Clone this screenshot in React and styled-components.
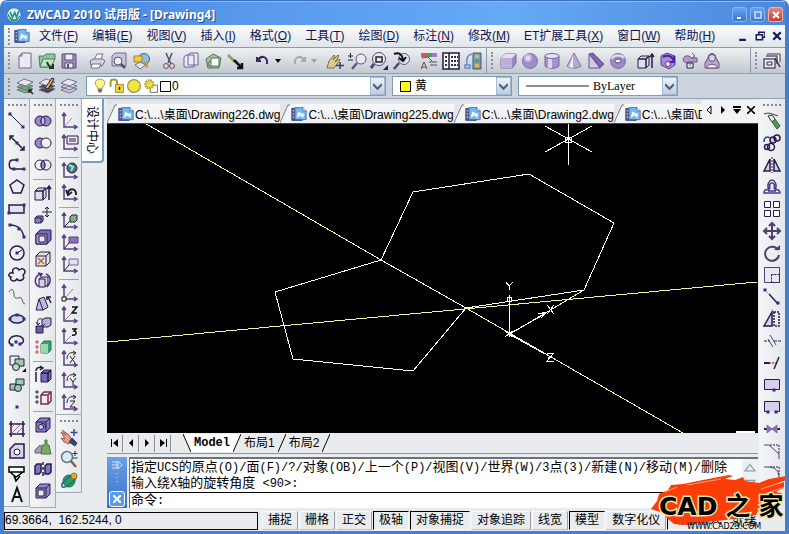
import React, { useState } from 'react';
import styled, { createGlobalStyle, css } from 'styled-components';

const GlobalStyle = createGlobalStyle`
  * {
    box-sizing: border-box;
  }
  body {
    margin: 0;
    background: #fff;
    font-family: 'Liberation Sans', 'Noto Sans CJK SC', sans-serif;
    font-size: 12px;
    color: #000;
  }
  button, input, select {
    font: inherit;
    color: inherit;
    padding: 0;
    margin: 0;
    border: 0;
    background: none;
  }
`;

// ---------- window frame ----------

const Window = styled.div`
  display: flex;
  flex-direction: column;
  height: 100vh;
  min-height: 530px;
  overflow: hidden;
  position: relative;
  border: solid #4180d0;
  border-width: 0 4px 3px;
  border-radius: 7px 7px 0 0;
  background: #e9ecee;
`;

const TitleBar = styled.header`
  display: flex;
  align-items: center;
  gap: 5px;
  flex: none;
  height: 25px;
  margin: 0 -4px;
  padding: 3px 6px 0;
  border-top: 1px solid #3a70bd;
  background: linear-gradient(to right, #4181dc, #5a9bee 35%, #65a9f6 65%, #4a87da);
  box-shadow: inset 0 1px 0 #8bbdf5;
`;

const Title = styled.h1`
  flex: 1;
  margin: 0;
  font-family: 'Noto Sans', 'Noto Sans CJK SC', sans-serif;
  font-size: 12px;
  font-weight: bold;
  line-height: 20px;
  color: #fff;
  text-shadow: 1px 1px 0 #1f4a8c;
`;

const WindowButtons = styled.div`
  display: flex;
  gap: 3px;
`;

const WindowButton = styled.button`
  display: flex;
  align-items: center;
  justify-content: center;
  width: 15px;
  height: 15px;
  border: 1px solid ${(props) => (props.$close ? '#f0b0a4' : '#86b4f2')};
  border-radius: 3px;
  background: ${(props) =>
    props.$close
      ? 'linear-gradient(#e08a7c, #c8382c)'
      : 'linear-gradient(#6ba3ee, #3a74d0)'};
`;

const MenuBar = styled.nav`
  display: flex;
  align-items: center;
  flex: none;
  height: 23px;
  background: linear-gradient(#fafbfc, #e0e5ea);
  border-bottom: 1px solid #8b99a8;
`;

const Menus = styled.div`
  display: flex;
  flex: 1;
`;

const MenuItem = styled.button`
  padding: 0 7px;
  line-height: 20px;
  white-space: nowrap;
  color: #0a1450;
`;

const MdiButton = styled.button`
  display: flex;
  align-items: center;
  justify-content: center;
  width: 17px;
  height: 18px;
`;

// ---------- toolbars ----------

const Toolbar = styled.div`
  display: flex;
  flex: none;
  height: ${(props) => (props.$flat ? '25px' : '26px')};
  background: ${(props) =>
    props.$flat ? '#cbd3dc' : 'linear-gradient(#eef0f2, #c2c9d1)'};
  border-bottom: 1px solid #93a1b0;
`;

const ToolSection = styled.div`
  display: flex;
  align-items: center;
  gap: 6px;
  flex: ${(props) => (props.$grow ? 1 : 'none')};
  padding-right: 2px;
  border-right: ${(props) => (props.$last ? 'none' : '1px solid #8d99a6')};
`;

const ToolGroup = styled.div`
  display: flex;
  align-items: center;
`;

const Grip = styled.span`
  flex: none;
  ${(props) =>
    props.$wide
      ? css`
          width: 18px;
          margin: 5px 0 4px;
          border-top: 2px dotted #7d8894;
        `
      : css`
          height: 17px;
          margin: 0 -2px 0 4px;
          border-left: 2px dotted #8893a0;
        `}
`;

const ToolButton = styled.button`
  display: flex;
  align-items: center;
  justify-content: center;
  flex: none;
  width: ${(props) => (props.$narrow ? '8px' : '22px')};
  height: 22px;
`;

const Combo = styled.div`
  display: flex;
  align-items: center;
  gap: ${(props) => props.$gap || 2}px;
  width: ${(props) => props.$width}px;
  height: 20px;
  padding-left: ${(props) => props.$indent}px;
  border: 1px solid #7f9db9;
  background: #fff;
  font-family: ${(props) => (props.$serif ? "'Liberation Serif', serif" : 'inherit')};
`;

const ComboSelect = styled.select`
  flex: 1;
  min-width: 0;
  height: 18px;
  appearance: none;
  outline: none;
`;

const ComboArrow = styled.span`
  display: flex;
  align-items: center;
  justify-content: center;
  width: 15px;
  height: 18px;
  border: 1px solid #a5b9d0;
  background: linear-gradient(#edf2f8, #c0cede);
`;

// ---------- body ----------

const Body = styled.div`
  display: flex;
  flex: 1;
  min-height: 0;
`;

const ColumnStack = styled.div`
  display: flex;
  flex-direction: column;
  flex: none;
`;

const ToolColumn = styled.div`
  display: flex;
  flex-direction: column;
  align-items: center;
  flex: none;
  align-self: flex-start;
  width: 26px;
  max-height: 100%;
  overflow: hidden;
  padding-bottom: ${(props) => props.$bottom || 0}px;
  border: solid #a0acb8;
  border-width: ${(props) => (props.$bare ? '0' : '0 1px 1px 0')};
  background: linear-gradient(to right, #f4f5f6, #e4e8eb);
`;

const Divider = styled.span`
  flex: none;
  width: 20px;
  height: 1px;
  margin: 3px 0 2px;
  background: #9aa5b0;
`;

const SideTab = styled.button`
  flex: none;
  align-self: flex-start;
  width: 22px;
  height: 64px;
  border: 1px solid #7d9cc0;
  border-width: 0 2px 2px 0;
  border-radius: 0 0 4px 0;
  background: #fff;
  writing-mode: vertical-rl;
  text-orientation: sideways;
  line-height: 20px;
`;

const Main = styled.main`
  display: flex;
  flex-direction: column;
  flex: 1;
  min-width: 0;
  padding: 0 1px 0 3px;
`;

const DocumentTabs = styled.div`
  display: flex;
  flex: none;
  height: 25px;
  padding-top: 5px;
  background: linear-gradient(#dde1e5, #f3f4f5);
  border-bottom: 1px solid #444;
`;

const TabStrip = styled.div`
  display: flex;
  flex: 1;
  min-width: 0;
  overflow: hidden;
`;

const DocumentTab = styled.button`
  display: flex;
  align-items: center;
  flex: none;
  gap: 1px;
  height: 19px;
  white-space: nowrap;
  background: linear-gradient(#f7f8f9, #eceef0);
`;

const TabControls = styled.div`
  display: flex;
  flex: none;
  margin-top: -4px;
  background: #f1f3f4;
`;

const TabControl = styled.button`
  display: flex;
  align-items: center;
  justify-content: center;
  width: 14px;
  height: 20px;
`;

const Canvas = styled.div`
  flex: 1;
  min-height: 0;
  overflow: hidden;
  background: #000;
`;

const LayoutBar = styled.div`
  display: flex;
  align-items: center;
  flex: none;
  height: 21px;
  margin-bottom: 3px;
  border-bottom: 1px solid #8b9298;
`;

const LayoutNav = styled.button`
  display: flex;
  align-items: center;
  justify-content: center;
  width: 16px;
  height: 17px;
  border-right: 1px solid #8b9298;
`;

const LayoutTabs = styled.div`
  display: flex;
  padding-left: 12px;
`;

const LayoutTab = styled.button`
  height: 18px;
  padding: 0 3px;
  line-height: 18px;
  background: ${(props) => (props.$active ? '#fff' : 'none')};
  font-family: ${(props) =>
    props.$active ? "'Liberation Mono', monospace" : 'inherit'};
  font-weight: ${(props) => (props.$active ? 'bold' : 'normal')};
`;

// ---------- command line ----------

const CommandPanel = styled.section`
  display: flex;
  flex: none;
  height: 51px;
`;

const CommandHandle = styled.div`
  display: flex;
  flex-direction: column;
  align-items: center;
  justify-content: space-between;
  width: 20px;
  margin-right: 2px;
  padding: 3px 0 1px;
  background: linear-gradient(#6aa0e6, #3b72c4);
`;

const CommandClose = styled.button`
  display: flex;
  align-items: center;
  justify-content: center;
  width: 16px;
  height: 16px;
  border: 1px solid #fff;
  border-radius: 3px;
  background: #5d9be6;
`;

const CommandBody = styled.div`
  display: flex;
  flex-direction: column;
  flex: 1;
  min-width: 0;
  border: solid #6c7378;
  border-width: 2px 0 0 1px;
  background: #fff;
  font-family: 'Liberation Mono', 'Noto Sans CJK SC', monospace;
`;

const CommandLog = styled.div`
  display: flex;
  height: 34px;
  border-bottom: 1px solid #000;
`;

const LogText = styled.div`
  flex: 1;
  min-width: 0;
  overflow: hidden;
  padding: 1px 1px 0;
  line-height: 16px;
  white-space: nowrap;
`;

const LogLine = styled.p`
  margin: 0;
  height: 16px;
`;

const Han = styled.span`
  font-size: 13px;
`;

const ScrollBar = styled.div`
  display: flex;
  flex-direction: column;
  justify-content: space-between;
  width: 16px;
  background: #eef1f3;
`;

const ScrollButton = styled.button`
  display: flex;
  align-items: center;
  justify-content: center;
  height: 16px;
`;

const CommandEntry = styled.label`
  display: flex;
  align-items: center;
  gap: 4px;
  flex: 1;
  padding: 0 1px;
  line-height: 14px;
`;

const CommandInput = styled.input`
  flex: 1;
  min-width: 0;
  height: 14px;
  outline: none;
`;

// ---------- status bar ----------

const StatusBar = styled.footer`
  display: flex;
  align-items: center;
  gap: 1px;
  flex: none;
  height: 23px;
  padding-top: 2px;
  white-space: nowrap;
`;

const Coordinates = styled.output`
  width: 254px;
  height: 18px;
  margin-right: 3px;
  border: 1px solid #000;
  line-height: 15px;
  white-space: pre;
`;

const StatusButton = styled.button`
  height: 19px;
  padding: 0 5px;
  line-height: 17px;
  border: 1px solid;
  border-color: ${(props) =>
    props.$pressed ? '#000 #f6f7f8 #f6f7f8 #000' : '#f8f9fa #9aa1a8 #b8bec4 #f8f9fa'};
`;

const StatusText = styled.span`
  margin-left: 4px;
`;

// ---------- logo over the corner ----------

const Badge = styled.div`
  position: absolute;
  right: -4px;
  bottom: -3px;
  width: 140px;
  height: 60px;
`;

const BadgeBrush = styled.svg`
  position: absolute;
  inset: 0;
`;

const BadgeName = styled.div`
  position: absolute;
  left: 10px;
  top: 18px;
  display: flex;
  align-items: center;
  gap: 8px;
  font-family: 'DejaVu Sans', 'Noto Sans CJK SC', sans-serif;
  font-size: 25px;
  font-weight: bold;
  line-height: 30px;
  color: #000;
  -webkit-text-stroke: 3px #f4e3a4;
  paint-order: stroke fill;
`;

const BadgeUrl = styled.div`
  position: absolute;
  left: 38px;
  top: 48px;
  font-family: 'DejaVu Sans', sans-serif;
  font-size: 8px;
  line-height: 10px;
  color: #000;
`;

// ---------- icons ----------

const ink = '#2a1a48';
const violet = '#8470b4';
const pale = '#d8d0ea';

const ucsAxes = (
  <path d="M5 2v14h13M3 5l2-3 2 3M15 14l3 2-3 2" stroke="#5a4080" strokeWidth="1.5" />
);

const cube = (fill) => (
  <>
    <path d="M3 7l4-4h10v10l-4 4H3z" fill={fill} />
    <path d="M3 7h10v10M13 7l4-4" />
  </>
);

const stack = (color) => (
  <>
    <path d="M2 14l7-4 9 3-7 4zM2 11l7-4 9 3-7 4z" fill={color} stroke="#77728a" />
    <path d="M2 7l7-4 9 3-7 4z" fill="#e8e4f2" stroke="#77728a" />
  </>
);

const dots = (...points) =>
  points.map(([x, y]) => (
    <rect key={`${x}-${y}`} x={x - 1.5} y={y - 1.5} width="3" height="3" fill="#3b2a78" stroke="none" />
  ));

const ICONS = {
  app: (
    <>
      <circle cx="10" cy="10" r="9" fill="#d6f0ee" stroke="#2a6a8c" />
      <path d="M3 9c3 9 11 9 14 2-2 9-13 9-14-2z" fill="#1e8a72" stroke="#1e8a72" />
      <path d="M5 6l3 7 3-6 2 6 3-8" stroke="#258a8c" strokeWidth="2" />
    </>
  ),
  dwg: (
    <>
      <path d="M1 3h13v15H1z" fill="#56578c" stroke="#333a70" />
      <path d="M5 2h10l4 4v11H5z" fill="#78b8ee" stroke="#3f6aa8" />
      <path d="M15 2v4h4" fill="#fff" stroke="#3f6aa8" />
      <path d="M7 15l2-8 4 2 4 1-2 5-3-3z" fill="#e6f5ff" stroke="none" />
      <path d="M2 6h2M2 10h2M2 14h2" stroke="#fff" />
    </>
  ),
  new: <path d="M4 5l3-3h9v15H4zM4 5h3V2" fill="#eee8f5" stroke="#71668c" />,
  open: (
    <>
      <path d="M2 5h5l2-2h9v4l-4 9H3z" fill="#8fc79c" stroke="#4c7a5c" />
      <path d="M6 8h12l-4 8H3z" fill="#c4e3ca" stroke="#4c7a5c" />
      <path d="M10 11c1 4 3 5 6 6M16 13v4h-4" stroke="#1d3a20" strokeWidth="2" />
    </>
  ),
  save: (
    <>
      <path d="M3 3h14v14H3z" fill="#9c8cb8" stroke="#5c4f80" />
      <path d="M6 3h8v6H6zM6 12h8v5H6z" fill="#efeaf6" stroke="#5c4f80" />
      <path d="M8 13h2v4H8z" fill="#5c4f80" stroke="none" />
    </>
  ),
  print: (
    <>
      <path d="M7 9l3-6h6l-3 7z" fill="#fff" stroke="#74698c" />
      <path d="M3 10l3-2h10l2 2-3 5H4z" fill="#d7cfe4" stroke="#74698c" />
      <path d="M5 13h9l-2 4H4z" fill="#fff" stroke="#74698c" />
    </>
  ),
  preview: (
    <>
      <path d="M3 5l3-3h11v13H3z" fill="#cfc5e2" stroke="#74698c" />
      <circle cx="9" cy="10" r="4" fill="#eef1fa" stroke="#55506c" />
      <path d="M12 13l4 4" stroke="#55506c" strokeWidth="2.5" />
    </>
  ),
  publish: (
    <>
      <circle cx="13" cy="8" r="5.5" fill="#8cc0e0" stroke="#40608c" />
      <path d="M3 5h8v6H3z" fill="#f3cc36" stroke="#a8801e" />
      <path d="M4 14l5-3 6 3-6 4z" fill="#e8e2f2" stroke="#74698c" />
      <path d="M13 11c3 1 4 4 2 6" stroke="#d09a20" strokeWidth="2" />
    </>
  ),
  cut: (
    <>
      <path d="M7 2l5 11M13 2L9 12" stroke="#55496c" strokeWidth="1.5" />
      <circle cx="7" cy="15" r="2.5" stroke="#7c4a6c" />
      <circle cx="13" cy="15" r="2.5" stroke="#7c4a6c" />
    </>
  ),
  copy: (
    <path d="M3 6l2-2h8v12H3zM7 4l2-2h8v12H7z" fill="#eee9f6" stroke="#6c60a0" />
  ),
  paste: (
    <>
      <path d="M3 8l7-5 8 4-2 10H5z" fill="#a6c6a6" stroke="#55705c" />
      <path d="M8 7h8v8H8z" fill="#fff" stroke="#55705c" />
      <path d="M7 10c-3 2-2 5 1 6" stroke="#3c6344" />
    </>
  ),
  match: (
    <>
      <path d="M3 4l7 7" stroke="#86a05a" strokeWidth="2.5" />
      <path d="M9 9l7 7M17 12v5h-5" stroke="#111" strokeWidth="2.5" />
    </>
  ),
  undo: <path d="M5 9c3-5 10-4 9 4M4 6v4h4" stroke="#36265c" strokeWidth="2" />,
  redo: <path d="M15 9c-3-5-10-4-9 4M16 6v4h-4" stroke="#a3abb2" strokeWidth="2" />,
  pan: (
    <>
      <path d="M2 17l2-7 5-6 1 1-2 4 5-5 1 1-4 6 4-3 1 1-6 8z" fill="#dccb8e" stroke="#7c6c44" />
      <path d="M15 11v7M11 14.500h8" stroke="#3c3c60" strokeWidth="1.5" />
    </>
  ),
  zoom: (
    <>
      <circle cx="14" cy="8" r="5" fill="#e8e8f6" stroke="#605880" />
      <path d="M10 12l-5 6" stroke="#605880" strokeWidth="2.5" />
      <path d="M1 5h5M3.500 2v5M1 9h5" stroke="#222" />
    </>
  ),
  zoomWindow: (
    <>
      <circle cx="10" cy="8" r="6.500" fill="#ebe8f6" stroke="#504870" />
      <path d="M7 6h6v5H7z" stroke="#222" strokeWidth="1.5" />
      <path d="M5 13l-3 4" stroke="#504870" strokeWidth="3" />
      <path d="M14 19h5v-5z" fill="#16206c" stroke="none" />
    </>
  ),
  zoomPrev: (
    <>
      <circle cx="13" cy="8" r="5.500" fill="#e6e4f4" stroke="#605880" />
      <path d="M8 12l-5 6" stroke="#504870" strokeWidth="2.5" />
      <path d="M3 3c5-2 8 0 9 6M15 6l-3 4-4-3" stroke="#111" strokeWidth="2" />
    </>
  ),
  props: (
    <>
      <path d="M2 2h6v4H2z" fill="#d25a5a" stroke="none" />
      <path d="M8 2h5v4H8z" fill="#49a050" stroke="none" />
      <path d="M13 2h5v4h-5z" fill="#9c7ad0" stroke="none" />
      <path d="M3 7l6-1 5 5M2 18l3-7 3 7M3 16h4" stroke="#6a4a4a" />
      <path d="M10 11h8M11 14h7" stroke="#8c98a8" strokeWidth="2" />
    </>
  ),
  calc: (
    <>
      <path d="M2 2h16v16H2zM8 2v16" fill="#f8f8fa" stroke="#1e1e3c" strokeWidth="1.5" />
      <path d="M10 6h7M10 10h7M10 14h7M4 6h2M4 10h2M4 14h2" stroke="#333" strokeWidth="2" strokeDasharray="2 1" />
    </>
  ),
  palette: (
    <>
      <path d="M10 2h8v16h-8z" fill="#7a9cc0" stroke="#44587c" />
      <path d="M12 4h4v3h-4zM12 13h4v3h-4z" fill="#e5b93a" stroke="none" />
      <path d="M12 9h4v2h-4z" fill="#49a050" stroke="none" />
      <path d="M9 3C4 4 3 8 4 14M2 14h5v3H2z" stroke="#668cc0" strokeWidth="1.5" />
    </>
  ),
  box: (
    <>
      <path d="M3 7l4-4h11v9l-4 5H3z" fill="#9a88be" stroke="#76669c" />
      <path d="M3 7l4-4h11l-4 4z" fill="#e6e0f2" stroke="none" />
      <path d="M3 7h11v10H3z" fill="#bdb0d8" stroke="none" />
    </>
  ),
  sphere: (
    <>
      <circle cx="10" cy="10" r="7.5" fill="#a08cc8" stroke="#8470b0" />
      <circle cx="8" cy="7" r="4" fill="#c6b8e2" stroke="none" />
      <circle cx="8" cy="7" r="2" fill="#e8e2f4" stroke="none" />
    </>
  ),
  cylinder: (
    <>
      <path d="M3 5v10c3 3 11 3 14 0V5z" fill="#a594ca" stroke="#76669c" />
      <path d="M6 7v10h4V7z" fill="#dcd4ec" stroke="none" />
      <ellipse cx="10" cy="5" rx="7" ry="2.5" fill="#e6e0f2" stroke="#76669c" />
    </>
  ),
  cone: (
    <>
      <path d="M10 2l7 13c-3 3-11 3-14 0z" fill="#b5a8d2" stroke="#8878a8" />
      <path d="M9 4v13l-4-1z" fill="#efeaf6" stroke="none" />
    </>
  ),
  wedge: (
    <>
      <path d="M3 3l4-1 11 11-4 4z" fill="#8068ac" stroke="#64508c" />
      <path d="M3 3l11 14H3z" fill="#d5cbe8" stroke="#64508c" />
    </>
  ),
  torus: (
    <>
      <circle cx="10" cy="10" r="7.5" fill="#9c8ac4" stroke="#8470b0" />
      <path d="M4 8c1-4 9-5 12-1" stroke="#e8e2f4" strokeWidth="2" />
      <ellipse cx="10" cy="10" rx="3" ry="2" fill="#f3f3f8" stroke="#5c4a88" />
    </>
  ),
  extrude: (
    <>
      <path d="M2 8l3-3h8v9l-3 3H2z" fill="#dedaf0" />
      <path d="M2 8h8v9M10 8l3-3M16 17V3M14 6l2-3 2 3" strokeWidth="1.5" />
    </>
  ),
  revolve3d: (
    <>
      <path d="M3 5l6-3 8 3v9l-6 4-8-4z" fill="#a58ad4" stroke="#5c4090" />
      <path d="M5 6c6-3 10 0 11 5M16 5v6h-5" stroke="#4a24a8" strokeWidth="2" />
      <path d="M7 12l4-2 2 4-4 2z" fill="#efeaf8" stroke="#5c4090" />
    </>
  ),
  sweep: (
    <>
      <path d="M3 9c0-4 6-6 8-2h6v4H9c-2 0-4 2-6-2z" fill="#ad9ccc" stroke="#62507f" />
      <path d="M7 12h6v5H7z" fill="#efeaf6" />
      <path d="M10 12v3M12 2l3 3-3 2" stroke="#62507f" />
    </>
  ),
  loft: (
    <>
      <path d="M3 17V12l3-5c0-6 8-6 8 0l3 5v5z" fill="#b6a8d0" stroke="#62507f" />
      <circle cx="10" cy="7" r="3.500" fill="#d9d1e8" stroke="#62507f" />
      <path d="M5 17c0-5 10-5 10 0z" fill="#efeaf6" stroke="#62507f" />
    </>
  ),
  redline: (
    <>
      <path d="M5 3h13v8" fill="#fff" stroke="#333" />
      <path d="M2 8h11v9H2zM4 5h11v8" fill="#efeaf6" stroke="#62507f" strokeWidth="1.5" />
      <path d="M5 11h5v3H5z" stroke="#333" />
      <path d="M13 7l5 9" stroke="#333" strokeWidth="1.500" />
    </>
  ),
  layerPrev: (
    <>
      {stack('#6cb07a')}
      <path d="M14 14l4 4M14 17v-3h3" stroke="#222" strokeWidth="1.5" />
    </>
  ),
  layerEdit: (
    <>
      {stack('#3c3c48')}
      <path d="M8 12l7-10 2 1-6 10z" fill="#e6b04a" stroke="#222" />
    </>
  ),
  layers: stack('#d0cae2'),
  bulb: (
    <>
      <path d="M7 13c0-3-3-3-3-7 0-6 12-6 12 0 0 4-3 4-3 7z" fill="#fdf68c" stroke="#8c8450" />
      <path d="M7 15h6M8 17h4" stroke="#666" strokeWidth="2" />
    </>
  ),
  lock: (
    <>
      <path d="M2 11V5c0-4 8-4 8 0v5" stroke="#a8982a" strokeWidth="2.5" />
      <path d="M8 8h10v10H8z" fill="#ecd93a" stroke="#8c7c20" />
      <path d="M13 11v4" stroke="#333" strokeWidth="2" />
    </>
  ),
  sun: <circle cx="10" cy="10" r="8" fill="#f2e63c" stroke="#8c9850" strokeWidth="1.5" />,
  sunViewport: (
    <>
      <path d="M9 9h9v9H9z" fill="#fff" stroke="#555" />
      <circle cx="8" cy="8" r="5" fill="#f0e040" stroke="#b0a43c" strokeWidth="3" strokeDasharray="2 1" />
    </>
  ),
  line: <><path d="M3 3l13 13" />{dots([3, 3], [16, 16])}</>,
  xline: <><path d="M3 3l14 14M3 7V3h4M17 13v4h-4" strokeWidth="1.5" />{dots([10, 10])}</>,
  pline: <><path d="M9 5H6c-5 0-5 9 0 9h11" strokeWidth="1.5" />{dots([10, 5], [7, 14], [17, 14])}</>,
  polygon: <path d="M10 3l7 5-3 8H6L3 8z" fill="#efecf4" strokeWidth="1.5" />,
  rectangle: <><path d="M2 6h15v8H2z" fill="#e6e0f0" strokeWidth="1.5" />{dots([2, 14], [17, 6])}</>,
  arc: <><path d="M3 4c8 0 13 5 14 13" strokeWidth="1.5" />{dots([3, 4], [12, 8], [17, 16])}</>,
  circle: <><circle cx="10" cy="10" r="7" fill="#efecf4" strokeWidth="1.5" /><path d="M10 10l5-3" />{dots([10, 10])}</>,
  cloud: <path d="M6 8c-2-6 5-6 6-3 5-4 8 2 4 5 3 5-4 7-6 4-3 4-8 1-6-2-4-1-2-5 2-4z" fill="#efecf4" strokeWidth="1.500" />,
  spline: <path d="M2 5c3-5 5-2 5 3s5 2 7 3 1 6 4 6" stroke="#555064" />,
  ellipse: <><ellipse cx="10" cy="10" rx="7" ry="4" fill="#d6d4f0" strokeWidth="1.5" />{dots([10, 6], [3, 10], [17, 10])}</>,
  ellipseArc: <><path d="M14 13c6-4 0-9-6-8S0 12 5 14" strokeWidth="1.5" />{dots([9, 11], [13, 13], [5, 14])}</>,
  block: (
    <>
      <path d="M3 3h9v9H3z" fill="#efecf4" />
      <path d="M8 6h9v7H8z" fill="#9ccca6" />
      <circle cx="9" cy="14" r="3.5" fill="#b8dcbc" />
      <path d="M15 19h4v-4z" fill="#111" stroke="none" />
    </>
  ),
  makeBlock: <><path d="M9 4h8v6H9zM3 9h6v6H3z" fill="#9ccca6" /><circle cx="11" cy="13" r="3.500" fill="#9ccca6" /></>,
  point: dots([10, 10]),
  hatch: <><path d="M4 2v16M2 5h16M16 2v16M2 15h16" strokeWidth="1.5" /><path d="M4 9l4-4M4 15L14 5M9 15l7-7" stroke="#a26a8c" /></>,
  region: <><path d="M3 17V8l5-5h9v14z" fill="#d8d4f0" strokeWidth="1.500" /><circle cx="10" cy="11" r="3" fill="#fff" /></>,
  wipeout: <path d="M2 4h15v5H2zM3 9l6 5 7-5M7 13l2 5 4-5" fill="#fff" stroke="#000" strokeWidth="1.5" />,
  text: <path d="M5 17l5-14 5 14M6 12h8" stroke="#111" strokeWidth="2" />,
  union: <><circle cx="7" cy="10" r="5" fill="#9a86d0" /><circle cx="13" cy="10" r="5" fill="#9a86d0" /><ellipse cx="10" cy="10" rx="2" ry="4" fill="#c8bcec" /></>,
  subtract: <><circle cx="7" cy="10" r="5" fill="#9a86d0" /><circle cx="13" cy="10" r="5" fill="#f2f0f8" /></>,
  intersect: <><circle cx="7" cy="10" r="5" fill="#f2f0f8" /><circle cx="13" cy="10" r="5" /><ellipse cx="10" cy="10" rx="2" ry="4" fill="#9a86d0" /></>,
  moveFace: <><path d="M2 13l2-2h6v5l-2 2H2zM2 13h6v5" fill="#8c7cc4" /><path d="M14 2v10M9 7h10M12 4l2-2 2 2M12 10l2 2 2-2" /></>,
  offsetFace: <><path d="M3 7l4-4h11v10l-4 4H3z" fill="#7a68b8" /><path d="M3 7h11v10H3z" fill="#a898d4" /><path d="M6 9h6v6H6z" fill="#eee9f8" /></>,
  deleteFace: <>{cube('#e6e0e6')}<path d="M5 9l6 6M11 9l-6 6" stroke="#c06a3c" strokeWidth="1.5" /></>,
  rotateFace: <><path d="M6 8l3-2h6v7l-3 3H6zM6 8h6v8" fill={pale} /><path d="M6 16c-6-4-4-12 2-13M13 3c6 3 5 9 1 13M5 2l4 1-2 3" stroke="#4b308c" strokeWidth="1.500" /></>,
  taperFace: <><path d="M3 17L6 6l5-2 4 10-5 3zM6 6l4 11" fill="#c4b8e4" /><path d="M15 4l3 6M14 7V4h4" strokeWidth="1.500" /></>,
  copyFace: <><path d="M9 5l3-2h6v7l-3 2H9z" fill="#b8acd8" /><path d="M3 11h7v7H3zM10 11l2-2" fill="#6d58b4" /><path d="M9 4C5 3 4 5 5 9M3 7l2 3 2-2" /></>,
  colorFace: <><path d="M8 7l3-3h7v9l-3 3H8z" fill="#3d9c70" stroke="#2a7050" /><path d="M8 7h7v9H8z" fill="#96d8b0" stroke="none" /><path d="M3 4h2v2H3zM3 9h2v2H3zM3 14h2v2H3z" stroke="#c0504a" /></>,
  copyEdge: <><path d="M8 8l3-3h7v9l-3 3H8z" fill="#7a66c0" /><path d="M8 8h7v9M15 8l3-3M3 17V7M3 6c0-4 4-4 6-3M7 1l3 2-3 2" strokeWidth="1.5" /></>,
  colorEdge: <><path d="M8 8l3-3h7v9l-3 3H8zM8 8h7v9M15 8l3-3" fill="#f4eef2" stroke="#7c2c50" strokeWidth="1.500" /><path d="M3 4h2v2H3zM3 9h2v2H3zM3 14h2v2H3z" stroke="#333" /></>,
  imprint: <>{cube('#8878c8')}<circle cx="8" cy="12" r="2.500" fill={pale} /><path d="M8 9c4-2 5 2 4 4" /></>,
  clean: <><path d="M2 13l5-5 5 8H2z" fill="#a898c4" stroke="#666" /><path d="M9 8h3V3h2v5h2l2 9H8z" fill="#7aac60" stroke="#4c7040" /></>,
  separate: <path d="M2 7l2-2h4v8l-2 2H2zM12 7l2-2h4v8l-2 2h-4zM10 3v3M10 8v3M10 13v4" fill="#8474c4" strokeWidth="1.5" />,
  shell: <>{cube('#9486cc')}<path d="M5 9h6v6H5z" fill="#eee" /></>,
  ucs: <>{ucsAxes}<path d="M6 15l7-8" stroke="#999" /></>,
  ucsNamed: <>{ucsAxes}<path d="M8 3h11v8H8z" fill="#f0ecf6" /><path d="M10 6h7M10 8h7" /></>,
  ucsWorld: <>{ucsAxes}<circle cx="13" cy="7" r="5" fill="#3c7c80" /><path d="M10 4l4 2-2 4" stroke="#a8dcc8" strokeWidth="2" /></>,
  ucsPrev: <>{ucsAxes}<path d="M9 11c-1-6 9-7 8 1M7 7l2 5 4-3" stroke="#222" strokeWidth="2" /></>,
  ucsFace: <>{ucsAxes}<path d="M11 6l2-2h5v5l-2 2h-5z" fill="#7cb87c" /><path d="M5 16l6-6" /></>,
  ucsObject: <>{ucsAxes}<path d="M10 4h9v6h-9z" fill="#8470bc" stroke="#5a4080" /><path d="M5 16l5-6" /></>,
  ucsView: <>{ucsAxes}<path d="M10 4h9v6h-9z" fill="#e4dff0" stroke="#75669c" /><path d="M5 16l5-6" /></>,
  ucsOrigin: <>{ucsAxes}<path d="M6 15l8-9" stroke="#888" /><path d="M3 14h4v4H3z" fill="#fff" stroke="#111" /></>,
  ucsZAxis: <>{ucsAxes}<path d="M6 15l6-6" stroke="#888" /><path d="M13 2h5l-5 6h5" stroke="#111" strokeWidth="1.5" /></>,
  ucs3Point: <>{ucsAxes}<path d="M6 15l6-6" stroke="#888" /><path d="M13 2h4l-2 2c4 1 2 5-2 4" stroke="#111" strokeWidth="1.5" /></>,
  ucsX: <>{ucsAxes}<path d="M8 10c0-6 4-7 8-6M14 2l3 2-3 2M11 7l5 7M16 7l-5 7" stroke="#222" /></>,
  ucsY: <>{ucsAxes}<path d="M8 10c0-6 4-7 8-6M14 2l3 2-3 2M11 7l3 4 3-4M14 11v4" stroke="#222" /></>,
  ucsZ: <>{ucsAxes}<path d="M8 10c0-6 4-7 8-6M14 2l3 2-3 2M11 8h5l-5 6h5" stroke="#222" /></>,
  hand: (
    <>
      <path d="M2 5l5 3-4-5 7 5 3 5-3 4-5-2-3-4 4 1z" fill="#e0a088" stroke="#9c5c50" />
      <path d="M10 15l3-4 5 5-2 3z" fill="#34466c" stroke="#34466c" />
      <path d="M15 2v7M11.500 5.500h7" stroke="#3c4c90" strokeWidth="1.500" />
    </>
  ),
  zoomTime: (
    <>
      <circle cx="8" cy="8" r="5.5" fill="#d4eef6" stroke="#6c7480" strokeWidth="1.500" />
      <path d="M12 12l5 6" stroke="#8c5a3c" strokeWidth="2.5" />
      <path d="M16 2v5M13.500 4.500h5M13.500 9h5" stroke="#26365c" />
    </>
  ),
  orbit: (
    <>
      <circle cx="10" cy="10" r="6" fill="#28a058" stroke="#1c7040" />
      <ellipse cx="10" cy="10" rx="9" ry="3" transform="rotate(-38 10 10)" fill="none" stroke="#2c6c90" strokeWidth="1.5" />
      <circle cx="15" cy="5" r="3" fill="#d8ac38" stroke="#98741c" />
    </>
  ),
  erase: (
    <>
      <path d="M2 3c5-2 8 0 14 2" stroke="#333" />
      <path d="M6 5l4-1 8 11-3 3z" fill="#4f9c54" stroke="#3c5040" />
      <path d="M6 5l4-1 3 4-3 3z" fill="#f0ece0" stroke="#3c5040" />
    </>
  ),
  copyObj: <g strokeWidth="1.500"><circle cx="11" cy="7" r="3" fill={pale} /><circle cx="15" cy="5" r="3" /><circle cx="9" cy="14" r="3.500" /><circle cx="5" cy="14" r="2.500" /><path d="M2 9c0-5 3-6 6-4" stroke="#2c4c90" /></g>,
  mirror: <><path d="M8 4v12H2zM12 4v12h6z" fill={pale} strokeWidth="1.5" /><path d="M10 2v16" strokeDasharray="2 1" /></>,
  offset: <path d="M2 16h16c0-3-3-4-5-3 3-6-1-10-3-10s-6 4-3 10c-3-1-5 0-5 3zM6 14h8M8 12c-1-4 0-6 2-6s3 2 2 6" fill="#eae6f6" stroke="#4c3c8c" strokeWidth="1.500" />,
  array: <path d="M2.500 2.500h6v6h-6zM11.500 2.500h6v6h-6zM2.500 11.500h6v6h-6zM11.500 11.500h6v6h-6z" fill="#fff" />,
  move: <path d="M10 3v14M3 10h14M7 5l3-3 3 3M7 15l3 3 3-3M5 7l-3 3 3 3M15 7l3 3-3 3" stroke="#50406c" strokeWidth="2" />,
  rotate: <><path d="M16 7a7 7 0 1 0 1 5" stroke="#50406c" strokeWidth="2" /><path d="M12 7h6V2z" fill="#50406c" stroke="none" /></>,
  scale: <><path d="M2.500 2.500h15v15h-15z" fill="#ece6f4" stroke="#50406c" /><path d="M9.500 9.500h8v8h-8z" strokeDasharray="2 1" /></>,
  stretch: <><path d="M2 2l6 6" strokeDasharray="2 2" stroke={violet} /><path d="M7 7l9 10" strokeWidth="1.500" />{dots([3, 3], [16, 16])}</>,
  lengthen: <><path d="M10 3v14H2z" fill={pale} strokeWidth="1.500" /><path d="M12 3h5v14h-5z" strokeDasharray="2 1" strokeWidth="1.500" /></>,
  trim: <><path d="M2 10h6M12 10h7" strokeDasharray="3 1" /><path d="M6 8l5 8M8 4l6 10" stroke="#4c3c8c" /></>,
  extend: <><path d="M2 10h6" strokeWidth="2" /><path d="M17 4l-5 12" strokeWidth="1.500" /><path d="M7 10h7" stroke="#c03c3c" strokeWidth="1.500" strokeDasharray="2 1" /></>,
  breakPoint: <><path d="M2.500 4.500h15v10h-15z" fill={pale} />{dots([12, 15])}</>,
  breakGap: <><path d="M6 14.500H2.500v-10h15v10H14" fill={pale} />{dots([6, 15], [14, 15])}</>,
  join: <><path d="M2 10h16" strokeWidth="2" /><path d="M5 6l5 4-5 4zM15 6l-5 4 5 4z" fill={violet} stroke={violet} /></>,
  chamfer: <><path d="M2 4h5l10 9v5" stroke="#4c3c8c" /><path d="M8 4h9v9" strokeDasharray="2 1" /></>,
  fillet: <><path d="M2 4h5c6 0 10 4 10 10v4" stroke="#4c3c8c" /><path d="M8 4h9v9" strokeDasharray="2 1" /></>,
  explode: <path d="M10 2v5M4 4l4 4M16 4l-4 4M2 10h5M13 10h5M5 16l3-4M15 16l-3-4" stroke="#8a9c70" strokeWidth="2" />,
};

const Icon = ({ name, size = 20 }) => (
  <svg width={size} height={size} viewBox="0 0 20 20" fill="none" stroke={ink} aria-hidden="true">
    {ICONS[name]}
  </svg>
);

const Arrow = ({ d, width = 8, height = 8, color = '#000', outline }) => (
  <svg width={width} height={height} viewBox="0 0 8 8" aria-hidden="true">
    <path d={d} fill={outline ? 'none' : color} stroke={outline ? color : 'none'} strokeWidth={outline || 0} />
  </svg>
);

// ---------- data ----------

const MENUS = [
  ['文件', 'F'], ['编辑', 'E'], ['视图', 'V'], ['插入', 'I'], ['格式', 'O'], ['工具', 'T'],
  ['绘图', 'D'], ['标注', 'N'], ['修改', 'M'], ['ET扩展工具', 'X'], ['窗口', 'W'], ['帮助', 'H'],
];

const DRAW = ['line', 'xline', 'pline', 'polygon', 'rectangle', 'arc', 'circle', 'cloud', 'spline',
  'ellipse', 'ellipseArc', 'block', 'makeBlock', 'point', 'hatch', 'region', 'wipeout', 'text'];

const SOLIDS = ['union', 'subtract', 'intersect', '-', 'extrude', 'moveFace', 'offsetFace', 'deleteFace',
  'rotateFace', 'taperFace', 'copyFace', 'colorFace', '-', 'copyEdge', 'colorEdge', '-', 'imprint',
  'clean', 'separate', 'shell'];

const UCS = ['ucs', 'ucsNamed', '-', 'ucsWorld', 'ucsPrev', '-', 'ucsFace', 'ucsObject', 'ucsView', '-',
  'ucsOrigin', 'ucsZAxis', 'ucs3Point', 'ucsX', 'ucsY', 'ucsZ'];

const VIEW = ['hand', 'zoomTime', 'orbit'];

const MODIFY = ['erase', 'copyObj', 'mirror', 'offset', 'array', 'move', 'rotate', 'scale', 'stretch',
  'lengthen', 'trim', 'extend', 'breakPoint', 'breakGap', 'join', 'chamfer', 'fillet', 'explode'];

const DOCUMENTS = ['Drawing226', 'Drawing225', 'Drawing2', 'Drawing4'];

const LOG = [
  '指定UCS的原点(O)/面(F)/?/对象(OB)/上一个(P)/视图(V)/世界(W)/3点(3)/新建(N)/移动(M)/删除',
  '输入绕X轴的旋转角度 <90>:',
];

const MODES = ['捕捉', '栅格', '正交', '极轴', '对象捕捉', '对象追踪', '线宽', '模型', '数字化仪', '动态输入'];

const Tools = ({ names }) => (
  <ToolGroup>
    {names.map((name) => (
      <ToolButton key={name} aria-label={name}>
        <Icon name={name} />
      </ToolButton>
    ))}
  </ToolGroup>
);

const Column = ({ names, bottom, bare }) => (
  <ToolColumn $bottom={bottom} $bare={bare}>
    <Grip $wide />
    {names.map((name, i) =>
      name === '-' ? (
        <Divider key={i} />
      ) : (
        <ToolButton key={name} aria-label={name}>
          <Icon name={name} />
        </ToolButton>
      )
    )}
  </ToolColumn>
);

const DropArrow = () => (
  <ComboArrow>
    <Arrow d="M0 2l4 4 4-4" width={9} height={9} color="#4d6185" outline={2} />
  </ComboArrow>
);

// Chinese runs are set one size larger than the Latin ones
const MixedText = ({ children }) =>
  children
    .split(/([\u4e00-\u9fff]+)/)
    .map((part, i) => (i % 2 ? <Han key={i}>{part}</Han> : part));

const Slant = ({ left, active }) => (
  <svg width="8" height="18" aria-hidden="true">
    {active && <path d={left ? 'M0 0h8v18z' : 'M0 0h8L0 18z'} fill="#fff" />}
    <path d={left ? 'M0 0l8 18' : 'M8 0L0 18'} stroke="#000" />
  </svg>
);

const Drawing = () => (
  <svg width="100%" height="100%" fill="none" stroke="#fff" shapeRendering="crispEdges" role="img" aria-label="Model space">
    <g stroke="#f4f4a8">
      <path d="M36 -2L274 136L359 184L576 309" />
      <path d="M0 218L650 158" />
      <path d="M477 166L403 210" />
    </g>
    <path d="M306 68L422 50L507 99L477 166L359 184L274 136z" />
    <path d="M168 168L274 136L359 184L306 247L186 235z" />
    <path d="M402 213V171M400 178V173H404V178M398 207L406 213M406 207L398 213" />
    <path d="M402 210L438 190M431 190L440 188L434 194M402 210L438 230" />
    <path d="M399 158l3 4 4-4M402 162v4M440 181l7 9M447 181l-7 9M440 229h7l-7 8h7M441 233h5" />
    <path d="M461 0V41M438 2L485 28M485 2L438 28" />
    <path d="M458 13h6v5h-6zM458 15h6" />
    <path d="M629 308h19" strokeWidth="2" />
  </svg>
);

export default function App() {
  const [pressed, setPressed] = useState(['极轴', '对象捕捉', '模型', '动态输入']);
  const [layout, setLayout] = useState('Model');

  const toggle = (mode) =>
    setPressed((list) =>
      list.includes(mode) ? list.filter((item) => item !== mode) : [...list, mode]
    );

  return (
    <Window>
      <GlobalStyle />

      <TitleBar>
        <Icon name="app" size={16} />
        <Title>ZWCAD 2010 试用版 - [Drawing4]</Title>
        <WindowButtons>
          <WindowButton aria-label="Minimize">
            <Arrow d="M1 6h4v2H1z" color="#fff" />
          </WindowButton>
          <WindowButton aria-label="Maximize">
            <Arrow d="M1 1h6v6H1z" color="#cfe2fb" outline={1.5} />
          </WindowButton>
          <WindowButton $close aria-label="Close">
            <Arrow d="M1 1l6 6M7 1L1 7" color="#fff" outline={2} />
          </WindowButton>
        </WindowButtons>
      </TitleBar>

      <MenuBar>
        <ToolSection $last>
          <Grip />
          <Icon name="dwg" size={16} />
        </ToolSection>
        <Menus>
          {MENUS.map(([label, key]) => (
            <MenuItem key={label}>
              {label}(<u>{key}</u>)
            </MenuItem>
          ))}
        </Menus>
        <MdiButton aria-label="Minimize drawing">
          <Arrow d="M1 6h6v2H1z" width={9} height={9} color="#101c5c" />
        </MdiButton>
        <MdiButton aria-label="Restore drawing">
          <Arrow d="M3 3V1h5v4H6M1 3h5v4H1z" width={10} height={10} color="#101c5c" outline={1.2} />
        </MdiButton>
        <MdiButton aria-label="Close drawing">
          <Arrow d="M1 1l6 6M7 1L1 7" width={10} height={10} color="#101c5c" outline={1.8} />
        </MdiButton>
      </MenuBar>

      <Toolbar>
        <ToolSection>
          <Grip />
          <Tools names={['new', 'open', 'save']} />
          <Tools names={['print', 'preview', 'publish']} />
          <Tools names={['cut', 'copy', 'paste', 'match']} />
          <ToolGroup>
            <ToolButton aria-label="Undo"><Icon name="undo" /></ToolButton>
            <ToolButton $narrow aria-label="Undo list"><Arrow d="M1 2h6L4 6z" /></ToolButton>
          </ToolGroup>
          <ToolGroup>
            <ToolButton aria-label="Redo"><Icon name="redo" /></ToolButton>
            <ToolButton $narrow aria-label="Redo list"><Arrow d="M1 2h6L4 6z" color="#98a0a8" /></ToolButton>
          </ToolGroup>
          <Tools names={['pan', 'zoom', 'zoomWindow', 'zoomPrev']} />
          <Tools names={['props', 'calc', 'palette']} />
        </ToolSection>
        <ToolSection $grow>
          <Grip />
          <Tools names={['box', 'sphere', 'cylinder', 'cone', 'wedge', 'torus']} />
          <Tools names={['extrude', 'revolve3d', 'sweep', 'loft']} />
        </ToolSection>
        <ToolSection $last>
          <Grip />
          <Tools names={['redline']} />
        </ToolSection>
      </Toolbar>

      <Toolbar $flat>
        <ToolSection $last>
          <Grip />
          <Tools names={['layerPrev', 'layerEdit', 'layers']} />
          <Combo $width={300} $indent={5} $gap={1}>
            <Icon name="bulb" size={16} />
            <Icon name="lock" size={16} />
            <Icon name="sun" size={16} />
            <Icon name="sunViewport" size={16} />
            <svg width="11" height="11" aria-hidden="true">
              <path d="M.5 .5h10v10H.5z" fill="#fff" stroke="#000" />
            </svg>
            <ComboSelect aria-label="Layer" defaultValue="0">
              <option>0</option>
            </ComboSelect>
            <DropArrow />
          </Combo>
          <Combo $width={120} $indent={7} $gap={4}>
            <svg width="11" height="11" aria-hidden="true">
              <path d="M.5 .5h10v10H.5z" fill="#ff0" stroke="#000" />
            </svg>
            <ComboSelect aria-label="Color" defaultValue="黄">
              <option>黄</option>
            </ComboSelect>
            <DropArrow />
          </Combo>
          <Combo $width={160} $indent={7} $gap={4} $serif>
            <svg width="63" height="2" aria-hidden="true">
              <path d="M0 1h63" stroke="#3c1428" />
            </svg>
            <ComboSelect aria-label="Linetype" defaultValue="ByLayer">
              <option>ByLayer</option>
            </ComboSelect>
            <DropArrow />
          </Combo>
        </ToolSection>
      </Toolbar>

      <Body>
        <Column names={DRAW} />
        <Column names={SOLIDS} bottom={5} />
        <ColumnStack>
          <Column names={UCS} />
          <Column names={VIEW} />
        </ColumnStack>
        <SideTab>设计中心</SideTab>

        <Main>
          <DocumentTabs>
            <TabStrip>
              {DOCUMENTS.map((name) => (
                <DocumentTab key={name}>
                  <svg width="10" height="19" aria-hidden="true">
                    <path d="M0 0h10v19H0z" fill="#e4e7ea" />
                    <path d="M0 19L8 1h2v18z" fill="#f2f4f5" />
                    <path d="M0 19L8 1h2" fill="none" stroke="#777e86" />
                  </svg>
                  <Icon name="dwg" size={16} />
                  {`C:\\...\\桌面\\${name}.dwg`}
                </DocumentTab>
              ))}
            </TabStrip>
            <TabControls>
              <TabControl aria-label="Previous drawing"><Arrow d="M6 0v8L2 4z" outline={1} /></TabControl>
              <TabControl aria-label="Next drawing"><Arrow d="M2 0v8l4-4z" /></TabControl>
              <TabControl aria-label="Drawing list"><Arrow d="M0 0h8v2H0zM0 3h8L4 8z" /></TabControl>
              <TabControl aria-label="Close tab"><Arrow d="M0 0l8 8M8 0L0 8" outline={1.6} /></TabControl>
            </TabControls>
          </DocumentTabs>

          <Canvas>
            <Drawing />
          </Canvas>

          <LayoutBar>
            <LayoutNav aria-label="First layout"><Arrow d="M0 0h1v8H0zM7 0v8L2 4z" /></LayoutNav>
            <LayoutNav aria-label="Previous layout"><Arrow d="M6 0v8L2 4z" /></LayoutNav>
            <LayoutNav aria-label="Next layout"><Arrow d="M2 0v8l4-4z" /></LayoutNav>
            <LayoutNav aria-label="Last layout"><Arrow d="M1 0v8l5-4zM7 0h1v8H7z" /></LayoutNav>
            <LayoutTabs>
              <Slant left active={layout === 'Model'} />
              {['Model', '布局1', '布局2'].map((name) => (
                <React.Fragment key={name}>
                  <LayoutTab $active={layout === name} onClick={() => setLayout(name)}>
                    {name}
                  </LayoutTab>
                  <Slant active={layout === name} />
                </React.Fragment>
              ))}
            </LayoutTabs>
          </LayoutBar>

          <CommandPanel>
            <CommandHandle>
              <svg width="12" height="24" fill="none" stroke="#cfe0f8" aria-hidden="true">
                <path d="M1 2h5M1 5h5M1 8h5M6 1v8M7 1l4 4-4 4z" />
                <path d="M6 13v10" strokeDasharray="1 3" />
              </svg>
              <CommandClose aria-label="Close command line">
                <Arrow d="M0 0l8 8M8 0L0 8" color="#fff" outline={2} />
              </CommandClose>
            </CommandHandle>
            <CommandBody>
              <CommandLog>
                <LogText>
                  {LOG.map((line) => (
                    <LogLine key={line}>
                      <MixedText>{line}</MixedText>
                    </LogLine>
                  ))}
                </LogText>
                <ScrollBar>
                  <ScrollButton aria-label="Scroll up">
                    <Arrow d="M0 7l4-5 4 5z" width={12} height={10} color="#8ba0b8" outline={1} />
                  </ScrollButton>
                  <ScrollButton aria-label="Scroll down">
                    <Arrow d="M0 1l4 5 4-5z" width={12} height={10} color="#8ba0b8" outline={1} />
                  </ScrollButton>
                </ScrollBar>
              </CommandLog>
              <CommandEntry>
                <span><MixedText>命令:</MixedText></span>
                <CommandInput type="text" />
              </CommandEntry>
            </CommandBody>
          </CommandPanel>
        </Main>

        <Column names={MODIFY} bare />
      </Body>

      <StatusBar>
        <Coordinates>69.3664,  162.5244, 0</Coordinates>
        {MODES.map((mode) => (
          <StatusButton key={mode} $pressed={pressed.includes(mode)} onClick={() => toggle(mode)}>
            {mode}
          </StatusButton>
        ))}
        <StatusText>就绪</StatusText>
      </StatusBar>

      <Badge>
        <BadgeBrush width="140" height="60" aria-hidden="true">
          <path
            d="M2 35l6-8 2-7 9-4 3-5 12-1 20-4 26-5 4 1-8 3 10 1 8-3 2 4 14 2 10-4 17-3v4l-10 4 8-2v6l-9 4 7 1-3 5-17 6-6 11-10 2-20 3-20 2-18 3-14-1-6-5-5-6z"
            fill="#fb3d08"
          />
          <path d="M72 5l-34 6M134 8l-22 7M136 13l-18 6M28 13l-12 5" stroke="#fff" opacity=".5" />
        </BadgeBrush>
        <BadgeName>
          <span>CAD</span>
          <span>之</span>
          <span>家</span>
        </BadgeName>
        <BadgeUrl>WWW.CAD23.COM</BadgeUrl>
      </Badge>
    </Window>
  );
}
